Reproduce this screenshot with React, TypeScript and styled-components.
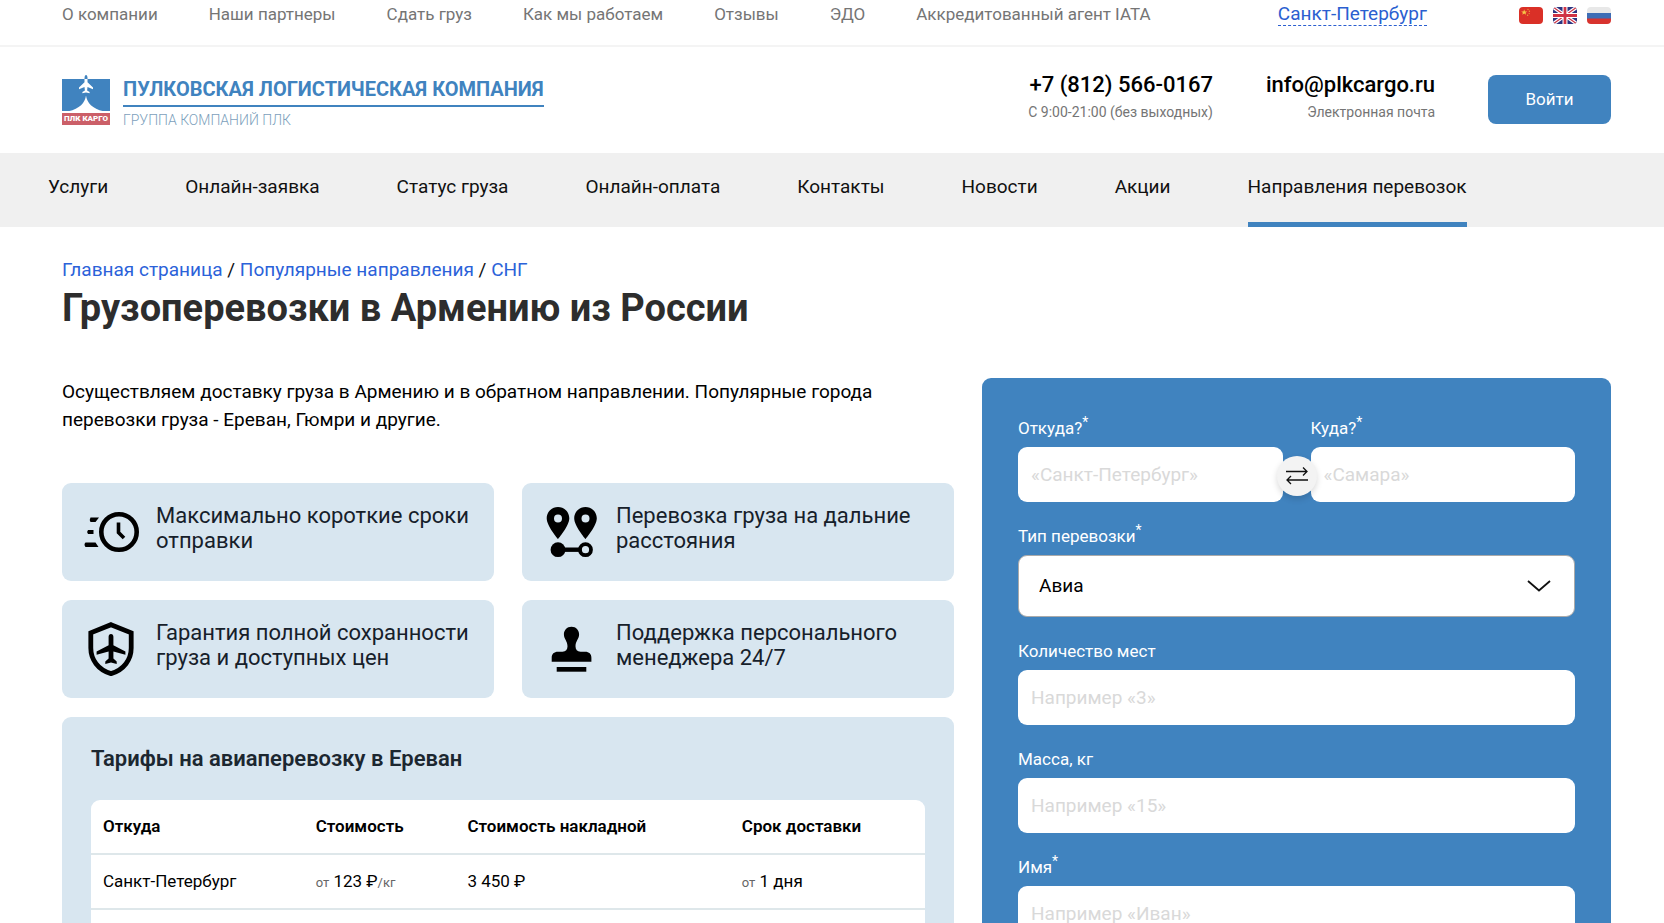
import React from 'react';
import styled, { createGlobalStyle } from 'styled-components';

const blue = '#4083bf';
const pale = '#d8e6f0';

const GlobalStyle = createGlobalStyle`
  *, *::before, *::after { box-sizing: border-box; }
  body { margin: 0; background: #fff; color: #111; font-family: Roboto, "Liberation Sans", sans-serif; }
  h1, h2, p, ul { margin: 0; padding: 0; }
  ul { list-style: none; }
  a { color: inherit; text-decoration: none; }
  button, input, select { font-family: inherit; }
`;

const TopBar = styled.div`
  display: flex;
  align-items: flex-start;
  height: 47px;
  padding: 2px 53px 0 62px;
  border-bottom: 2px solid #f4f4f4;
`;
const TopLinks = styled.ul`
  display: flex;
  gap: 51px;
  flex: 1;
  color: #757575;
  font-size: 17px;
  line-height: 25px;
  white-space: nowrap;
`;
const City = styled.a`
  color: #2b5fd0;
  font-size: 19px;
  line-height: 23px;
  border-bottom: 1px dashed #2b5fd0;
  margin-right: 92px;
`;
const Flags = styled.div`
  display: flex;
  gap: 10px;
  padding-top: 5px;
`;
const FlagLink = styled.a`
  display: block;
  width: 24px;
  height: 17px;
  border-radius: 4px;
  overflow: hidden;
  svg { display: block; }
`;

const Header = styled.header`
  display: flex;
  align-items: flex-start;
  gap: 53px;
  height: 106px;
  padding: 23px 53px 0 62px;
`;
const Logo = styled.a`
  display: flex;
  gap: 13px;
  padding-top: 9px;
  margin-right: auto;
`;
const LogoMark = styled.div`
  width: 48px;
  svg { display: block; }
`;
const LogoBadge = styled.div`
  margin-top: 2px;
  height: 12px;
  background: #cb5f68;
  color: #fff;
  font: 900 8px/12px Roboto, sans-serif;
  text-align: center;
  white-space: nowrap;
`;
const LogoName = styled.div`
  color: ${blue};
  font-weight: 700;
  font-size: 20px;
  line-height: 20px;
  padding-bottom: 6px;
  border-bottom: 2px solid ${blue};
  white-space: nowrap;
`;
const LogoSub = styled.div`
  color: #7d9fbc;
  font-weight: 300;
  font-size: 14px;
  line-height: 16px;
  padding-top: 5px;
`;
const Contact = styled.div`
  text-align: right;
  white-space: nowrap;
`;
const ContactMain = styled.a`
  display: block;
  color: #000;
  font-weight: 500;
  font-size: 22px;
  line-height: 30px;
`;
const ContactNote = styled.div`
  color: #757575;
  font-size: 14px;
  line-height: 24px;
`;
const LoginButton = styled.button`
  width: 123px;
  height: 49px;
  margin-top: 5px;
  padding: 0 0 2px;
  border: 0;
  border-radius: 8px;
  background: ${blue};
  color: #fff;
  font-size: 17px;
`;

const Nav = styled.nav`
  display: flex;
  gap: 77px;
  height: 74px;
  padding: 0 48px;
  background: #f0f0f0;
  white-space: nowrap;
`;
const NavLink = styled.a<{ $active?: boolean }>`
  font-size: 19px;
  line-height: 68px;
  border-bottom: 5px solid ${(p) => (p.$active ? blue : 'transparent')};
`;

const Main = styled.main`
  padding: 28px 53px 32px 62px;
`;
const Crumbs = styled.nav`
  font-size: 19px;
  line-height: 29px;
  a { color: #2b62d9; }
`;
const Title = styled.h1`
  color: #2d2d2d;
  font-weight: 700;
  font-size: 38px;
  line-height: 48px;
`;
const Columns = styled.div`
  display: grid;
  grid-template-columns: minmax(0, 892fr) minmax(0, 629fr);
  gap: 28px;
  align-items: start;
  padding-top: 46px;
`;
const Intro = styled.p`
  font-size: 19px;
  line-height: 28px;
  padding-bottom: 49px;
  color: #000;
`;
const Benefits = styled.ul`
  display: grid;
  grid-template-columns: 1fr 1fr;
  gap: 19px 28px;
`;
const Benefit = styled.li`
  display: flex;
  gap: 17px;
  min-height: 98px;
  padding: 20px 21px;
  border-radius: 9px;
  background: ${pale};
  color: #16202a;
  font-size: 22px;
  line-height: 25px;
  svg { flex: none; margin-top: 1px; }
`;
const Tariffs = styled.section`
  margin-top: 19px;
  padding: 28px 29px;
  border-radius: 9px;
  background: ${pale};
`;
const TariffsTitle = styled.h2`
  color: #1c2730;
  font-weight: 600;
  font-size: 22px;
  line-height: 28px;
  padding-bottom: 27px;
`;
const Table = styled.table`
  width: 100%;
  table-layout: fixed;
  border-spacing: 0;
  background: #fff;
  border-radius: 9px;
  font-size: 17px;
  color: #000;
  th, td {
    height: 55px;
    padding: 0 12px 2px;
    text-align: left;
    border-bottom: 2px solid #dee7ea;
  }
  th { font-weight: 600; }
  small { font-size: 13px; color: #666; }
`;
const Col = styled.col<{ $share: number }>`
  width: ${(p) => p.$share}%;
`;

const Form = styled.form`
  padding: 36px;
  border-radius: 9px;
  background: ${blue};
`;
const Route = styled.div`
  position: relative;
  display: grid;
  grid-template-columns: 1fr 1fr;
  gap: 28px;
`;
const Field = styled.div`
  display: flex;
  flex-direction: column;
  padding-bottom: 20px;
`;
const Label = styled.label`
  color: #fff;
  font-size: 17px;
  line-height: 29px;
  padding-bottom: 4px;
  sup { font-size: 14px; line-height: 0; }
`;
const Input = styled.input`
  width: 100%;
  height: 55px;
  padding: 0 13px;
  border: 0;
  border-radius: 9px;
  background: #fff;
  font-size: 19px;
  &::placeholder { color: #d9d9d9; opacity: 1; }
`;
const SwapButton = styled.button`
  position: absolute;
  left: calc(50% - 20px);
  top: 42px;
  width: 40px;
  height: 40px;
  padding: 0;
  border: 0;
  border-radius: 50%;
  background: #f3f3f3;
  box-shadow: 0 3px 6px rgba(0, 0, 0, 0.15);
  svg { display: block; margin: auto; }
`;
const SelectBox = styled.div`
  display: grid;
  align-items: center;
  svg { grid-area: 1 / 1; justify-self: end; margin-right: 24px; pointer-events: none; z-index: 1; }
`;
const Select = styled.select`
  grid-area: 1 / 1;
  width: 100%;
  height: 62px;
  padding: 0 20px 2px;
  appearance: none;
  border: 1px solid #aaa;
  border-radius: 9px;
  background: #fff;
  color: #000;
  font-size: 19px;
`;

const ChinaFlag = () => (
  <svg width="24" height="17" viewBox="0 0 24 17">
    <rect width="24" height="17" fill="#da3027" />
    <path d="M5.2 2.4l.8 2h2.2L6.5 5.7l.6 2.1-1.9-1.2-1.9 1.2.6-2.1-1.7-1.3h2.2z" fill="#f7c948" />
    <g fill="#e89a3c"><circle cx="9" cy="2.5" r=".7" /><circle cx="10.4" cy="4.3" r=".7" /><circle cx="10.2" cy="6.6" r=".7" /><circle cx="8.6" cy="8.2" r=".7" /></g>
  </svg>
);
const UkFlag = () => (
  <svg width="24" height="17" viewBox="0 0 24 17">
    <rect width="24" height="17" fill="#2b3480" />
    <path d="M0 0l24 17M24 0L0 17" stroke="#fff" strokeWidth="3.6" />
    <path d="M0 0l24 17M24 0L0 17" stroke="#cf3345" strokeWidth="1.2" />
    <path d="M12 0v17M0 8.500h24" stroke="#fff" strokeWidth="5" />
    <path d="M12 0v17M0 8.500h24" stroke="#cf3345" strokeWidth="2.800" />
  </svg>
);
const RussiaFlag = () => (
  <svg width="24" height="17" viewBox="0 0 24 17">
    <rect width="24" height="6" fill="#e8e8e8" />
    <rect y="6" width="24" height="6" fill="#3e6db5" />
    <rect y="11.500" width="24" height="5.500" fill="#d8332e" />
  </svg>
);

const LogoPicture = () => (
  <svg width="48" height="32" viewBox="0 0 48 32" overflow="visible">
    <rect width="48" height="32" fill={blue} />
    <path d="M24 16.500c.8 7 6.500 13.500 17.500 15.700V33h-35v-.8C17.500 30 23.200 23.500 24 16.500z" fill="#fff" />
    <path d="M24-4c-1 0-1.500 1.500-1.500 3.500v3.800L17 8.500v1.800l5.500-2.200.4 3.400-2.500 1.600v1.100L24 13.400l3.600.8v-1.100l-2.500-1.600.4-3.400 5.500 2.200V8.500l-5.500-5.200V-.5C25.500-2.500 25-4 24-4z" fill="#fff" />
    <path d="M24-4c-1 0-1.500 1.500-1.500 3.500V0h3v-.5C25.500-2.500 25-4 24-4z" fill={blue} />
  </svg>
);

const ClockIcon = () => (
  <svg width="56" height="56" viewBox="0 0 56 56">
    <circle cx="36" cy="28" r="17.700" fill="none" stroke="#000" strokeWidth="4.600" />
    <path d="M35.500 18.500V28.500l5.500 5.500" fill="none" stroke="#000" strokeWidth="3.600" />
    <path d="M7.500 13.500h8.500l-3.500 4.500h-5q-1.500-2.200 0-4.500zM5 26h5.500v4H5q-1.800-2 0-4zM2.500 38.500h10l3 4.400h-13q-2-2.200 0-4.400z" />
  </svg>
);
const PinsIcon = () => (
  <svg width="56" height="56" viewBox="0 0 56 56">
    <path fillRule="evenodd" d="M15 3C8.700 3 3.700 8 3.700 14.200 3.700 22 15 35 15 35s11.300-13 11.300-20.800C26.300 8 21.300 3 15 3zm0 15.500a4 4 0 110-8 4 4 0 010 8z" />
    <path fillRule="evenodd" d="M42.500 3c-6.300 0-11.300 5-11.300 11.200 0 7.800 11.300 20.800 11.300 20.800s11.300-13 11.300-20.800C53.800 8 48.800 3 42.500 3zm0 15.500a4 4 0 110-8 4 4 0 010 8z" />
    <circle cx="15" cy="45.700" r="7.400" />
    <path d="M15 45.700h22" stroke="#000" strokeWidth="4.400" />
    <circle cx="42.500" cy="45.700" r="5.500" fill="none" stroke="#000" strokeWidth="3.800" />
  </svg>
);
const ShieldIcon = () => (
  <svg width="56" height="56" viewBox="0 0 56 56">
    <path d="M28 3.700l20.200 8.100V27c0 11.500-7.200 21.800-20.200 25.600C15 48.800 7.800 38.500 7.800 27V11.800z" fill="none" stroke="#000" strokeWidth="4.800" />
    <path d="M28 13c-1.500 0-2.400 1.200-2.400 2.800v8.400L13.600 30.500v3.200l12-3.300v7.200l-3.300 3v2.400L28 41.600l5.700 1.400v-2.400l-3.300-3v-7.200l12 3.300v-3.200l-12-6.300v-8.400c0-1.600-.9-2.800-2.400-2.800z" />
  </svg>
);
const StampIcon = () => (
  <svg width="56" height="56" viewBox="0 0 56 56">
    <path d="M28.500 5.700c-4.600 0-7.600 3.500-7.600 7.600 0 4.700 3.600 6.800 3.600 12 0 3.500-1.700 5.400-5 5.400h-4.500c-4 0-6.300 2.300-6.300 6v4h39.700v-4c0-3.700-2.300-6-6.300-6h-4.600c-3.300 0-5-1.900-5-5.400 0-5.200 3.600-7.300 3.600-12 0-4.100-3-7.600-7.600-7.600z" />
    <path d="M13.700 46h29.600v4.700H13.700z" />
  </svg>
);
const SwapIcon = () => (
  <svg width="22" height="18" viewBox="0 0 22 18" fill="none" stroke="#111" strokeWidth="1.300">
    <path d="M0 4.500h21M17 .5l4 4-4 4M22 13H1M5 9l-4 4 4 4" />
  </svg>
);
const Chevron = () => (
  <svg width="24" height="12" viewBox="0 0 24 12" fill="none" stroke="#111" strokeWidth="1.800">
    <path d="M1 1l11 9.500L23 1" />
  </svg>
);

const topLinks = ['О компании', 'Наши партнеры', 'Сдать груз', 'Как мы работаем', 'Отзывы', 'ЭДО', 'Аккредитованный агент IATA'];
const navLinks = ['Услуги', 'Онлайн-заявка', 'Статус груза', 'Онлайн-оплата', 'Контакты', 'Новости', 'Акции', 'Направления перевозок'];
const benefits = [
  { icon: <ClockIcon />, text: 'Максимально короткие сроки отправки' },
  { icon: <PinsIcon />, text: 'Перевозка груза на дальние расстояния' },
  { icon: <ShieldIcon />, text: 'Гарантия полной сохранности груза и доступных цен' },
  { icon: <StampIcon />, text: 'Поддержка персонального менеджера 24/7' },
];

type TextFieldProps = { id: string; label: string; placeholder: string; required?: boolean };
const TextField = ({ id, label, placeholder, required }: TextFieldProps) => (
  <Field>
    <Label htmlFor={id}>{label}{required && <sup>*</sup>}</Label>
    <Input id={id} placeholder={placeholder} />
  </Field>
);

export default function App() {
  return (
    <>
      <GlobalStyle />
      <TopBar>
        <TopLinks>
          {topLinks.map((t) => <li key={t}><a href="#">{t}</a></li>)}
        </TopLinks>
        <City href="#">Санкт-Петербург</City>
        <Flags>
          <FlagLink href="#"><ChinaFlag /></FlagLink>
          <FlagLink href="#"><UkFlag /></FlagLink>
          <FlagLink href="#"><RussiaFlag /></FlagLink>
        </Flags>
      </TopBar>
      <Header>
        <Logo href="#">
          <LogoMark>
            <LogoPicture />
            <LogoBadge>ПЛК КАРГО</LogoBadge>
          </LogoMark>
          <div>
            <LogoName>ПУЛКОВСКАЯ ЛОГИСТИЧЕСКАЯ КОМПАНИЯ</LogoName>
            <LogoSub>ГРУППА КОМПАНИЙ ПЛК</LogoSub>
          </div>
        </Logo>
        <Contact>
          <ContactMain href="#">+7 (812) 566-0167</ContactMain>
          <ContactNote>С 9:00-21:00 (без выходных)</ContactNote>
        </Contact>
        <Contact>
          <ContactMain href="#">info@plkcargo.ru</ContactMain>
          <ContactNote>Электронная почта</ContactNote>
        </Contact>
        <LoginButton type="button">Войти</LoginButton>
      </Header>
      <Nav>
        {navLinks.map((t, i) => <NavLink key={t} href="#" $active={i === navLinks.length - 1}>{t}</NavLink>)}
      </Nav>
      <Main>
        <Crumbs>
          <a href="#">Главная страница</a> / <a href="#">Популярные направления</a> / <a href="#">СНГ</a>
        </Crumbs>
        <Title>Грузоперевозки в Армению из России</Title>
        <Columns>
          <div>
            <Intro>
              Осуществляем доставку груза в Армению и в обратном направлении. Популярные города перевозки груза - Ереван, Гюмри и другие.
            </Intro>
            <Benefits>
              {benefits.map((b) => <Benefit key={b.text}>{b.icon}<span>{b.text}</span></Benefit>)}
            </Benefits>
            <Tariffs>
              <TariffsTitle>Тарифы на авиаперевозку в Ереван</TariffsTitle>
              <Table>
                <colgroup>
                  <Col $share={25.5} /><Col $share={18.2} /><Col $share={32.9} /><Col $share={23.4} />
                </colgroup>
                <thead>
                  <tr><th>Откуда</th><th>Стоимость</th><th>Стоимость накладной</th><th>Срок доставки</th></tr>
                </thead>
                <tbody>
                  <tr>
                    <td>Санкт-Петербург</td>
                    <td><small>от</small> 123 ₽<small>/кг</small></td>
                    <td>3 450 ₽</td>
                    <td><small>от</small> 1 дня</td>
                  </tr>
                  <tr><td /><td /><td /><td /></tr>
                </tbody>
              </Table>
            </Tariffs>
          </div>
          <Form>
            <Route>
              <TextField id="from" label="Откуда?" placeholder="«Санкт-Петербург»" required />
              <TextField id="to" label="Куда?" placeholder="«Самара»" required />
              <SwapButton type="button"><SwapIcon /></SwapButton>
            </Route>
            <Field>
              <Label htmlFor="kind">Тип перевозки<sup>*</sup></Label>
              <SelectBox>
                <Select id="kind" defaultValue="air"><option value="air">Авиа</option></Select>
                <Chevron />
              </SelectBox>
            </Field>
            <TextField id="places" label="Количество мест" placeholder="Например «3»" />
            <TextField id="mass" label="Масса, кг" placeholder="Например «15»" />
            <TextField id="name" label="Имя" placeholder="Например «Иван»" required />
          </Form>
        </Columns>
      </Main>
    </>
  );
}
